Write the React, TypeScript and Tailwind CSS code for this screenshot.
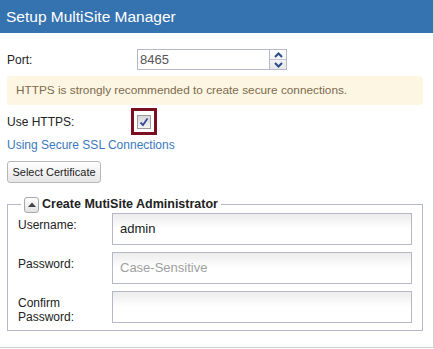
import React from "react";

const font = { fontFamily: '"Liberation Sans", Arial, sans-serif' };

function Input({ value, placeholder }: { value?: string; placeholder?: string }) {
  return (
    <div className="w-[300px] h-[32px] border border-[#b5b8c8] bg-gradient-to-b from-[#ececec] via-white to-white flex items-center pl-[7px] text-[13px]">
      {value ? (
        <span className="text-[#222]">{value}</span>
      ) : (
        <span className="text-[#a0a0a0]">{placeholder}</span>
      )}
    </div>
  );
}

export default function App() {
  return (
    <div style={font} className="w-[434px] h-[349px] bg-white">
      <div className="w-[434px] h-[348px] border-r border-b border-[#cfcfcf]">
        <div className="h-[33px] bg-[#3572b0] pl-[6px] flex items-center text-white text-[15.5px]">
          Setup MultiSite Manager
        </div>
        <div className="px-[7px]">
          <div className="mt-[16px] h-[21px] flex items-center text-[12px] text-[#222]">
            <div className="w-[130px]">Port:</div>
            <div className="w-[133px] h-[21px] border border-[#b5b8c8] flex items-center pl-[2px] text-[13px] text-[#555]">
              8465
            </div>
            <div className="w-[17px] h-[21px] border border-l-0 border-[#b5b8c8] flex flex-col bg-gradient-to-b from-white to-[#e8e8e8]">
              <div className="flex-1 flex items-center justify-center border-b border-[#c5c8d4]">
                <svg width="9" height="6" viewBox="0 0 9 6">
                  <path d="M1 5 L4.5 1.5 L8 5" stroke="#2c4a86" strokeWidth="2" fill="none" />
                </svg>
              </div>
              <div className="flex-1 flex items-center justify-center">
                <svg width="9" height="6" viewBox="0 0 9 6">
                  <path d="M1 1 L4.5 4.5 L8 1" stroke="#2c4a86" strokeWidth="2" fill="none" />
                </svg>
              </div>
            </div>
          </div>
          <div className="mt-[6px] w-[416px] h-[29px] rounded-[4px] bg-[#fcf6e3] flex items-center pl-[9px] text-[11.8px] text-[#7d6a4e]">
            HTTPS is strongly recommended to create secure connections.
          </div>
          <div className="mt-[3px] h-[27px] flex items-center text-[12px] text-[#222]">
            <div className="w-[124px]">Use HTTPS:</div>
            <div className="w-[26px] h-[27px] border-[3px] border-[#7c0f1f] flex items-center justify-center">
              <div className="w-[14px] h-[14px] border border-[#9a9a9a] bg-gradient-to-b from-[#d8d8d8] to-[#f4f4f4] flex items-center justify-center">
                <svg width="10" height="10" viewBox="0 0 10 10">
                  <path d="M1.5 5.5 L4 8 L8.5 1.5" stroke="#3b4aa0" strokeWidth="1.8" fill="none" />
                </svg>
              </div>
            </div>
          </div>
          <div className="mt-[1px] h-[18px] flex items-center text-[12px] text-[#3b78bd]">
            Using Secure SSL Connections
          </div>
          <div className="mt-[7px] w-[94px] h-[22px] rounded-[3px] border border-[#b8b8b8] bg-gradient-to-b from-white to-[#e6e6e6] flex items-center justify-center text-[11px] text-[#222]">
            Select Certificate
          </div>
          <fieldset className="mt-[13px] w-[416px] border border-[#b5b8c8] pl-[10px] pr-[10px] pb-[6px] pt-[0px]">
            <legend className="ml-[3px] px-[3px] flex items-center gap-[3px] h-[17px]">
              <div className="w-[15px] h-[16px] rounded-[3px] border border-[#a8a8a8] bg-gradient-to-b from-white to-[#e2e2e2] flex items-center justify-center">
                <svg width="8" height="5" viewBox="0 0 8 5">
                  <path d="M0 5 L4 0.5 L8 5 Z" fill="#444" />
                </svg>
              </div>
              <span className="text-[12.5px] font-bold text-[#222]">Create MutiSite Administrator</span>
            </legend>
            <div className="flex flex-col gap-[7px] text-[12px] text-[#222]">
              <div className="flex">
                <div className="w-[94px] pt-[5px] leading-[14px]">Username:</div>
                <Input value="admin" />
              </div>
              <div className="flex">
                <div className="w-[94px] pt-[5px] leading-[14px]">Password:</div>
                <Input placeholder="Case-Sensitive" />
              </div>
              <div className="flex">
                <div className="w-[94px] pt-[5px] leading-[14px]">
                  Confirm
                  <br />
                  Password:
                </div>
                <Input />
              </div>
            </div>
          </fieldset>
        </div>
      </div>
    </div>
  );
}
